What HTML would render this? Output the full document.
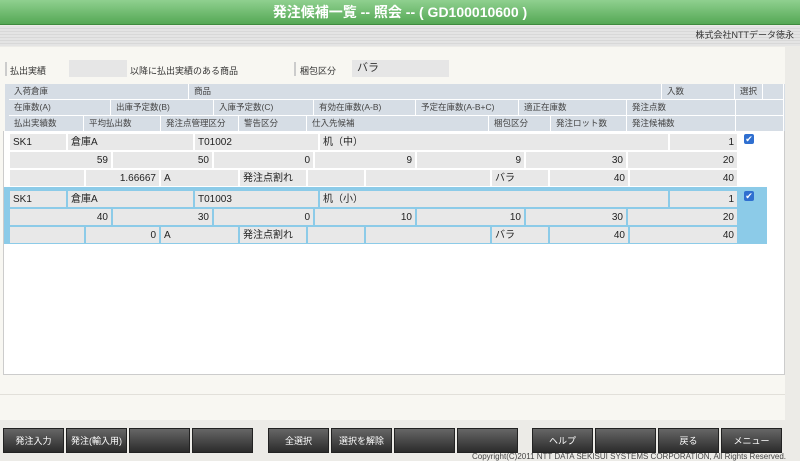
<!DOCTYPE html><html><head><meta charset="utf-8"><style>
*{margin:0;padding:0;box-sizing:border-box}
body{width:800px;height:461px;overflow:hidden;position:relative;background:#ecebe7;font-family:"Liberation Sans","Noto Sans CJK JP",sans-serif;font-size:9px;color:#333}
.a{position:absolute}
.hd{left:0;top:0;width:800px;height:25px;background:linear-gradient(#8fd08f,#55a855);border-bottom:1px solid #3e8a3e;color:#fff;font-weight:bold;font-size:14px;text-align:center;line-height:25px}
.gb{left:0;top:26px;width:800px;height:20px;background:repeating-linear-gradient(#e4e4e4 0 2px,#d8d8d8 2px 3px);text-align:right;padding-right:6px;line-height:18px;font-size:9px}
.pn{left:0;top:47px;width:785px;height:373px;background:#f8f7f2}
.h{background:#d6dde5;border-right:1px solid #fff;border-bottom:1px solid #fff;padding-left:5px;line-height:15px;height:16px;color:#444;font-size:8.5px}
.c{background:#e8e8e8;border:1px solid #fff;height:18px;line-height:17px;padding:0 3px;font-size:10px;color:#222}
.r{text-align:right}
.hl .c{border-color:#8ccbe8}
.btn{top:428px;width:61px;height:25px;background:linear-gradient(#666,#2b2b2b);color:#fff;text-align:center;line-height:25px;font-size:9px;border:1px solid #222}
.cb{width:10px;height:10px;background:#2f6fd0;border-radius:2px;color:#fff;font-size:9px;line-height:10px;text-align:center}
</style></head><body>
<div class="a hd">発注候補一覧 -- 照会 -- ( GD100010600 )</div>
<div class="a gb">株式会社NTTデータ徳永</div>
<div class="a pn"></div>
<div class="a" style="left:5px;top:62px;width:2px;height:14px;background:#ccc"></div>
<div class="a" style="left:10px;top:64px">払出実績</div>
<div class="a" style="left:69px;top:60px;width:58px;height:17px;background:#e6e6e6"></div>
<div class="a" style="left:130px;top:64px">以降に払出実績のある商品</div>
<div class="a" style="left:294px;top:62px;width:2px;height:14px;background:#ccc"></div>
<div class="a" style="left:300px;top:64px">梱包区分</div>
<div class="a" style="left:352px;top:60px;width:97px;height:17px;background:#e6e6e6;font-size:11px;padding-left:5px;line-height:17px">バラ</div>
<!-- headers -->
<div class="a" style="left:5px;top:84px;width:780px;height:47px;background:#d6dde5"></div>
<div class="a h" style="left:9px;top:84px;width:180px">入荷倉庫</div>
<div class="a h" style="left:189px;top:84px;width:473px">商品</div>
<div class="a h" style="left:662px;top:84px;width:73px">入数</div>
<div class="a h" style="left:735px;top:84px;width:28px">選択</div>
<div class="a h" style="left:763px;top:84px;width:21px"></div>
<div class="a h" style="left:9px;top:100px;width:102px">在庫数(A)</div>
<div class="a h" style="left:111px;top:100px;width:103px">出庫予定数(B)</div>
<div class="a h" style="left:214px;top:100px;width:100px">入庫予定数(C)</div>
<div class="a h" style="left:314px;top:100px;width:102px">有効在庫数(A-B)</div>
<div class="a h" style="left:416px;top:100px;width:103px">予定在庫数(A-B+C)</div>
<div class="a h" style="left:519px;top:100px;width:108px">適正在庫数</div>
<div class="a h" style="left:627px;top:100px;width:109px">発注点数</div>
<div class="a h" style="left:736px;top:100px;width:48px"></div>
<div class="a h" style="left:9px;top:116px;width:75px">払出実績数</div>
<div class="a h" style="left:84px;top:116px;width:77px">平均払出数</div>
<div class="a h" style="left:161px;top:116px;width:78px">発注点管理区分</div>
<div class="a h" style="left:239px;top:116px;width:68px">警告区分</div>
<div class="a h" style="left:307px;top:116px;width:182px">仕入先候補</div>
<div class="a h" style="left:489px;top:116px;width:62px">梱包区分</div>
<div class="a h" style="left:551px;top:116px;width:76px">発注ロット数</div>
<div class="a h" style="left:627px;top:116px;width:109px">発注候補数</div>
<div class="a h" style="left:736px;top:116px;width:48px"></div>
<div class="a" style="left:3px;top:131px;width:782px;height:244px;background:#fff;border:1px solid #ccc;border-top:none"></div>
<div class="a" style="left:4px;top:187px;width:763px;height:57px;background:#8ccbe8"></div>
<!-- row1 -->
<div class="a c" style="left:9px;top:133px;width:58px">SK1</div>
<div class="a c" style="left:67px;top:133px;width:127px">倉庫A</div>
<div class="a c" style="left:194px;top:133px;width:125px">T01002</div>
<div class="a c" style="left:319px;top:133px;width:350px">机（中）</div>
<div class="a c r" style="left:669px;top:133px;width:69px">1</div>
<div class="a cb" style="left:744px;top:134px">✔</div>
<div class="a c r" style="left:9px;top:151px;width:103px">59</div>
<div class="a c r" style="left:112px;top:151px;width:101px">50</div>
<div class="a c r" style="left:213px;top:151px;width:101px">0</div>
<div class="a c r" style="left:314px;top:151px;width:102px">9</div>
<div class="a c r" style="left:416px;top:151px;width:109px">9</div>
<div class="a c r" style="left:525px;top:151px;width:102px">30</div>
<div class="a c r" style="left:627px;top:151px;width:111px">20</div>
<div class="a c" style="left:9px;top:169px;width:76px"></div>
<div class="a c r" style="left:85px;top:169px;width:75px">1.66667</div>
<div class="a c" style="left:160px;top:169px;width:79px">A</div>
<div class="a c" style="left:239px;top:169px;width:68px">発注点割れ</div>
<div class="a c" style="left:307px;top:169px;width:58px"></div>
<div class="a c" style="left:365px;top:169px;width:126px"></div>
<div class="a c" style="left:491px;top:169px;width:58px">バラ</div>
<div class="a c r" style="left:549px;top:169px;width:80px">40</div>
<div class="a c r" style="left:629px;top:169px;width:109px">40</div>
<!-- row2 -->
<div class="hl">
<div class="a c" style="left:9px;top:190px;width:58px">SK1</div>
<div class="a c" style="left:67px;top:190px;width:127px">倉庫A</div>
<div class="a c" style="left:194px;top:190px;width:125px">T01003</div>
<div class="a c" style="left:319px;top:190px;width:350px">机（小）</div>
<div class="a c r" style="left:669px;top:190px;width:69px">1</div>
<div class="a c r" style="left:9px;top:208px;width:103px">40</div>
<div class="a c r" style="left:112px;top:208px;width:101px">30</div>
<div class="a c r" style="left:213px;top:208px;width:101px">0</div>
<div class="a c r" style="left:314px;top:208px;width:102px">10</div>
<div class="a c r" style="left:416px;top:208px;width:109px">10</div>
<div class="a c r" style="left:525px;top:208px;width:102px">30</div>
<div class="a c r" style="left:627px;top:208px;width:111px">20</div>
<div class="a c" style="left:9px;top:226px;width:76px"></div>
<div class="a c r" style="left:85px;top:226px;width:75px">0</div>
<div class="a c" style="left:160px;top:226px;width:79px">A</div>
<div class="a c" style="left:239px;top:226px;width:68px">発注点割れ</div>
<div class="a c" style="left:307px;top:226px;width:58px"></div>
<div class="a c" style="left:365px;top:226px;width:126px"></div>
<div class="a c" style="left:491px;top:226px;width:58px">バラ</div>
<div class="a c r" style="left:549px;top:226px;width:80px">40</div>
<div class="a c r" style="left:629px;top:226px;width:109px">40</div>
</div>
<div class="a cb" style="left:744px;top:191px">✔</div>
<div class="a" style="left:0;top:394px;width:785px;height:1px;background:#e2e0da"></div>
<div class="a btn" style="left:3px">発注入力</div>
<div class="a btn" style="left:66px">発注(輸入用)</div>
<div class="a btn" style="left:129px"></div>
<div class="a btn" style="left:192px"></div>
<div class="a btn" style="left:268px">全選択</div>
<div class="a btn" style="left:331px">選択を解除</div>
<div class="a btn" style="left:394px"></div>
<div class="a btn" style="left:457px"></div>
<div class="a btn" style="left:532px">ヘルプ</div>
<div class="a btn" style="left:595px"></div>
<div class="a btn" style="left:658px">戻る</div>
<div class="a btn" style="left:721px">メニュー</div>
<div class="a" style="right:14px;top:452px;font-size:8px;color:#444">Copyright(C)2011 NTT DATA SEKISUI SYSTEMS CORPORATION, All Rights Reserved.</div>
</body></html>
